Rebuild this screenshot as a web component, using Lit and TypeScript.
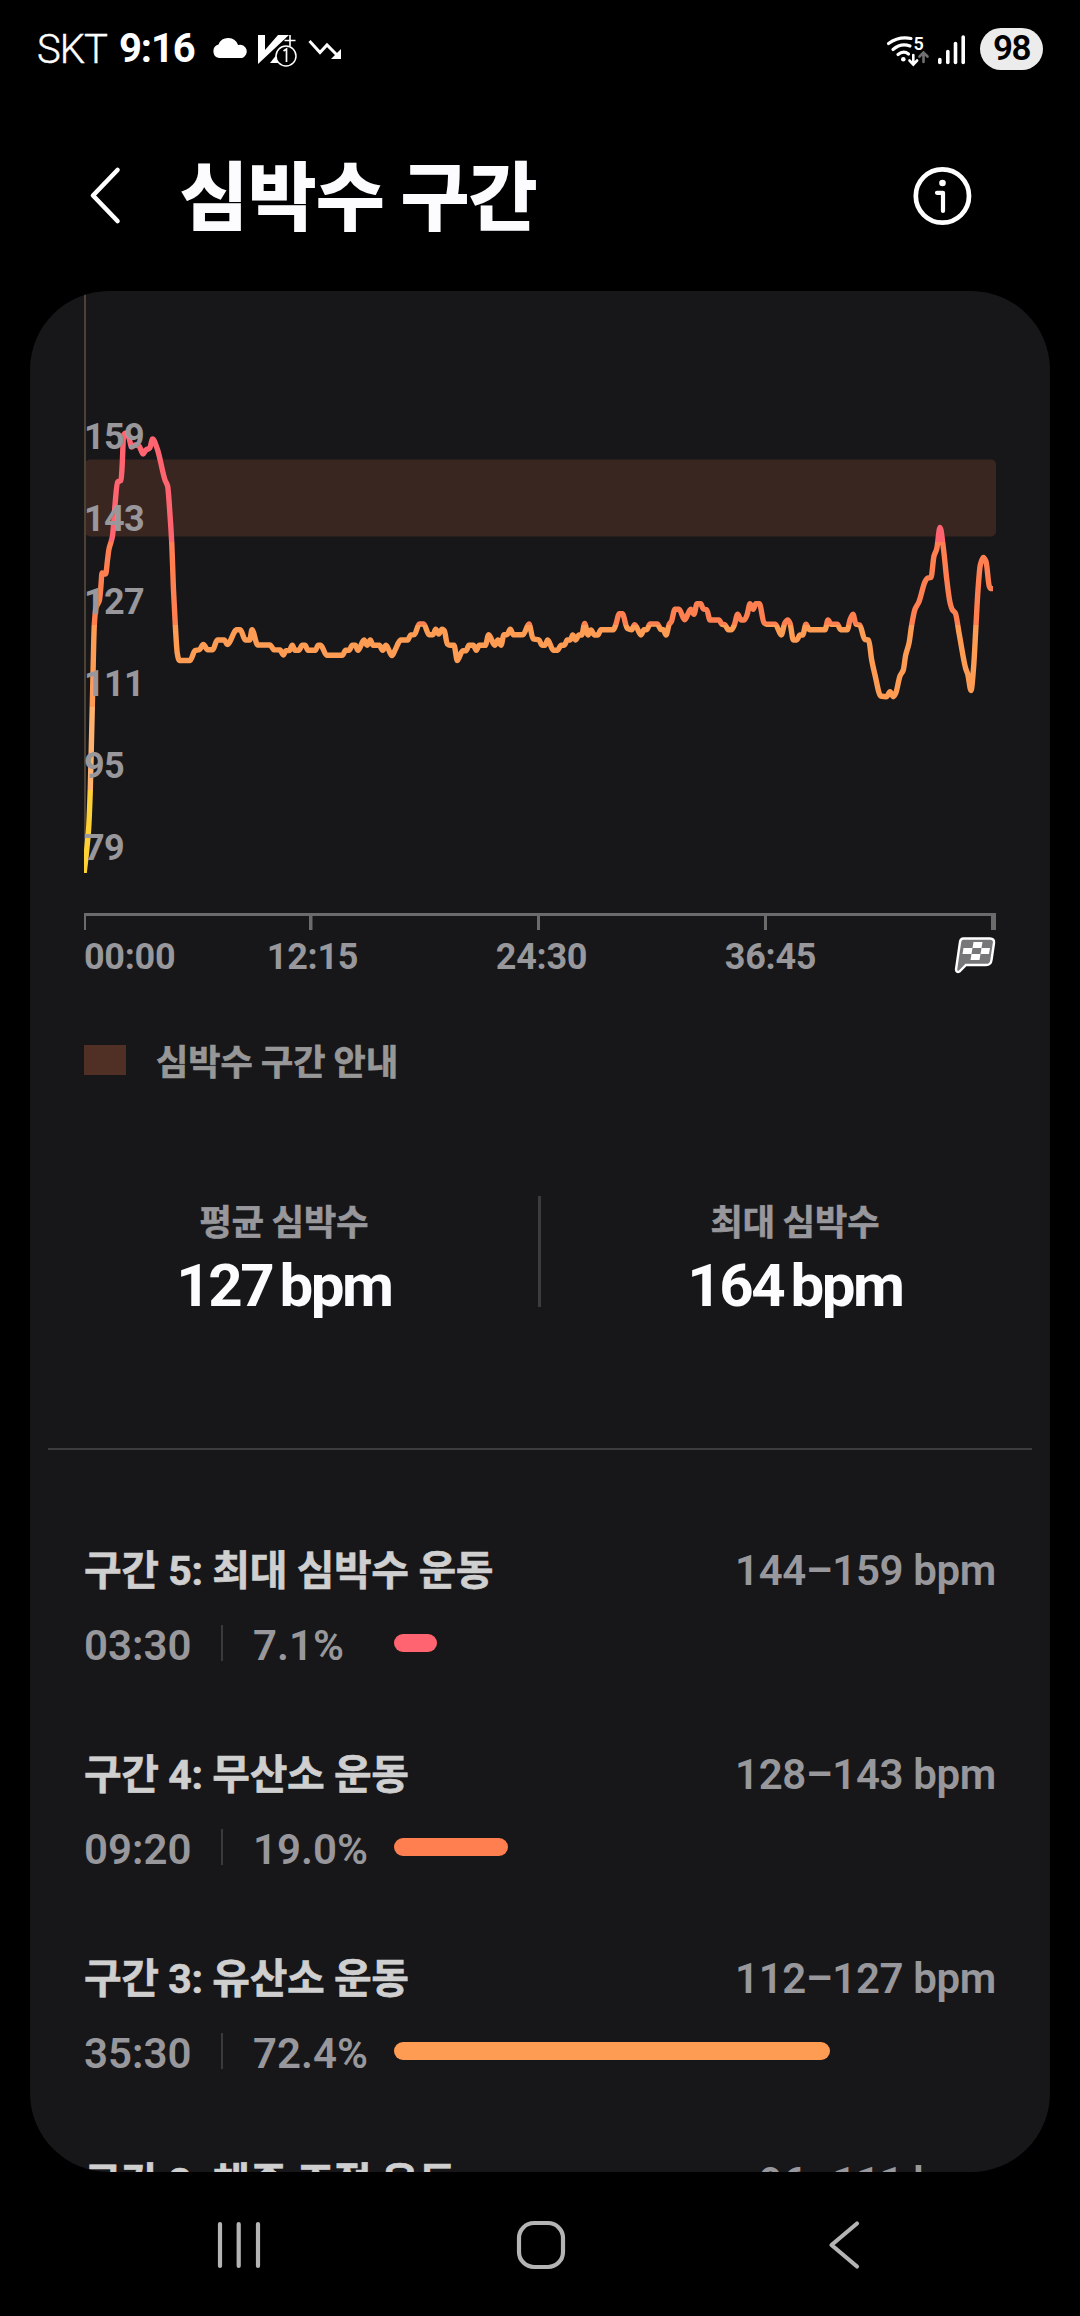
import { LitElement, html, css, svg, nothing } from "lit";
import { customElement, property } from "lit/decorators.js";

interface Zone {
  name: string;
  range: string;
  time?: string;
  percent?: number;
  color?: string;
}

const ZONES: Zone[] = [
  { name: "구간 5: 최대 심박수 운동", range: "144–159 bpm", time: "03:30", percent: 7.1, color: "#ff6470" },
  { name: "구간 4: 무산소 운동", range: "128–143 bpm", time: "09:20", percent: 19.0, color: "#ff7f50" },
  { name: "구간 3: 유산소 운동", range: "112–127 bpm", time: "35:30", percent: 72.4, color: "#ff9c54" },
  { name: "구간 2: 체중 조절 운동", range: "96–111 bpm" },
];

/* Heart-rate samples as x,y pairs in chart space. */
const TRACE = [
  "84,874 86.5,852 88.6,829 90.3,789 91.3,748 92.3,706.5 93.2,665 94.3,625 96,608 99.5,600 101,585 102,573 104,574 105.7,574",
  "107.5,560 109,549 112.5,536 115,505 117.5,482 121,480.5 122.2,465 123.6,435 126,433 129,438 131.6,447 135,445 139,446 143,454 146,450 149.7,448 152.6,439",
  "157.3,449 165,480 167.6,486 170,515 171.7,542 173.5,590 175.3,625 177.3,653.5 179.3,660.5 190,660.5 195,650.6 199.3,649.8 203.3,644.5 207.7,649.8",
  "212.7,649.8 217.3,640 224.3,640 227.3,644.5 236.7,629.8 240.3,629.8 245.3,640 249.7,640 252,629.8 257.7,645 270,645 274,649.8",
  "280,650 283.3,655 286,650.6 289.3,650.6 292.3,645.3 295,650.3 298.7,650.3 302.3,645.3 305,645.3 308,650.3 315.3,650.3 318.3,645.3 320.7,645.3 326.7,655.3",
  "342.3,655.3 345.7,650.3 349,650.3 352.3,645.3 355.3,645.3 358,650.3 364,640 367,645.3 370.3,640 373,645.3 379.3,645.3 382.7,650.3 386,645.3 392,655.6",
  "395,650.3 400.7,640 407.7,640 410.7,635 414.3,634.7 419.3,624 423.7,624 429,634.7 433,634.7 435.7,629.3 438.7,634 442,629.3 444.3,630.7 447.3,644 450,645.3",
  "454,645.3 457.3,660.5 462.7,650.7 466,650.7 469,645.3 473.3,645.3 476.3,650.3 479.3,645.3 485.3,645.3 488.7,634.7 494.7,645.3 498,640 501,645.3",
  "504,634.7 507,634.7 510.3,629.3 513.3,634.7 523,634.7 529,624 533,638.7 539,640 542,645.3 545,645.3 547.7,640 553.3,650.3 557.3,650.3 561.3,645.3",
  "564.3,645.3 567.3,640 570.3,640 572.7,635 575.7,640 579,635 581.7,635 584.7,623.5 588,635 591,630 594.3,635 597.7,635 601,629.7 613.3,629.7 615.7,625",
  "619.3,613.7 622.3,613.7 627.3,628.3 631.7,629.7 634.7,624.7 641,635 644,629.7 646.7,629.7 650,624 657.3,624 660.7,629.3 663.3,629.7 666,635 669.3,624",
  "671.3,621.7 675,609.3 679,609.3 684.7,619.7 690.7,609.3 694,614.3 697,603.7 700.7,603.7 703.3,609 706.7,609.7 710,620 719,620 721.7,624 725,625 728.3,629.7",
  "731.7,629.7 734.3,625 737.7,614.3 741,620 744.3,620 747,615 750,603.7 753.3,609.3 755.7,603.7 759.3,603.7 764,622.7 766.7,624.3 775.3,624.3 781.3,635",
  "784.7,623.3 787.7,620 790,623.3 793.3,640 796.7,640 800,635 802.7,635 806,624.3 809.3,629.7 825,629.7 828,620 831,624.3 837.3,624.3 840.7,629.7 847.3,629.7",
  "850,620 853,614.3 856,624.3 859.7,625 864.7,639.3 868.7,640.3 871.7,660 875,675 880.7,696 886.7,696.7 890,691.7 893.3,696.7 895.7,693.3 900,676 903.3,670",
  "905.7,655 909,643.3 911.7,625 915,609.3 919,601.7 925,581.7 927.7,578 931,577.5 934,556 936.7,549 940,527.5 943.5,549 946.7,579 950,602.5 952.5,610 955.3,613",
  "959.3,634.6 965.7,668.6 967.7,674 971,690.5 973.5,668.6 976,625 978,590 980.3,565 983.3,557.5 986,561.5 989.3,586.4 990.7,588.6 993,588.6",
].join(" ");

/* Monotone cubic interpolation through the samples. */
function smoothPath(source: string): string {
  const pts = source.split(" ").map((p) => p.split(",").map(Number));
  const slope = pts.slice(1).map(([x, y], i) => (y - pts[i][1]) / (x - pts[i][0]));
  const tangent = pts.map((_, i) => {
    const a = slope[i - 1];
    const b = slope[i];
    if (a === undefined) return b;
    if (b === undefined) return a;
    return a * b <= 0 ? 0 : (2 * a * b) / (a + b);
  });
  let d = `M${pts[0][0]} ${pts[0][1]}`;
  for (let i = 1; i < pts.length; i++) {
    const [x0, y0] = pts[i - 1];
    const [x1, y1] = pts[i];
    const h = (x1 - x0) / 3;
    d += `C${(x0 + h).toFixed(2)} ${(y0 + h * tangent[i - 1]).toFixed(2)} ${(x1 - h).toFixed(2)} ${(y1 - h * tangent[i]).toFixed(2)} ${x1} ${y1}`;
  }
  return d;
}

const LEVELS: [string, number][] = [
  ["159", 449], ["143", 531], ["127", 614], ["111", 696], ["95", 777.5], ["79", 859.5],
];

const HANGUL = css`"Roboto", "Noto Sans CJK KR", sans-serif`;

@customElement("status-bar")
class StatusBar extends LitElement {
  static styles = css`
    :host { display: flex; height: 100px; align-items: flex-start; justify-content: space-between; font-family: ${HANGUL}; color: #fff; }
    .left { display: flex; padding: 25px 0 0 37px; height: 48px; align-items: center; }
    .carrier { font-size: 40px; font-weight: 350; letter-spacing: -1px; width: 82px; line-height: 48px; margin-top: 2px; -webkit-text-stroke: 0.4px #fff; }
    .clock { font-size: 40px; font-weight: 700; letter-spacing: -1.1px; line-height: 48px; width: 91px; margin-top: 0; }
    .right { display: flex; padding: 28px 37px 0 0; }
    .battery { width: 63px; height: 42px; border-radius: 21px; background: #ececec; color: #000; font-size: 35px; font-weight: 650; line-height: 42px; text-align: center; letter-spacing: -1.4px; }
  `;
  render() {
    return html`
      <div class="left">
        <span class="carrier">SKT</span><span class="clock">9:16</span>
        <svg width="135" height="48" viewBox="210 25 135 48">
          <path d="M219 58 a7 7 0 0 1 -.5 -13.6 a10.5 10.5 0 0 1 19.6 .7 a6.6 6.6 0 0 1 4 12.8 z" fill="#fff" />
          <path d="M258 35 h7 v15 l13 -15 h11 l-31 29 z" fill="#fff" />
          <path d="M270 63 l8 -10 v10 z" fill="#fff" />
          <path d="M290 35 v11 M284.5 40.5 h11" stroke="#fff" stroke-width="1.6" fill="none" />
          <circle cx="286" cy="56" r="10" fill="#000" stroke="#fff" stroke-width="1.5" />
          <path d="M283.5 51 l3 -2 v13" stroke="#fff" stroke-width="1.7" fill="none" />
          <path d="M309.5 41 l10.5 11.5 l7 -7.5 l12 12" stroke="#fff" stroke-width="3" fill="none" />
          <path d="M341 49 v10 h-10 z" fill="#fff" />
        </svg>
      </div>
      <div class="right">
        <svg width="95" height="42" viewBox="885 28 95 42">
          <g fill="none" stroke="#fff" stroke-linecap="round">
            <path d="M888.5 43.5 Q899 36 911 38.5" stroke-width="3.2" />
            <path d="M893 49.5 Q901 42.5 910 46" stroke-width="3.2" />
            <path d="M898 54.5 Q903.5 50 908.5 54" stroke-width="3.2" />
            <path d="M913.3 55 v9 M909.5 60.5 l3.8 4 l3.8 -4" stroke-width="2.6" />
            <path d="M923.5 62 v-9 M919.5 56.5 l4 -4 l4 4" stroke="#707070" stroke-width="2.6" />
          </g>
          <circle cx="903.3" cy="59.3" r="2.3" fill="#fff" />
          <text x="913.5" y="49.5" font-family="Roboto" font-size="18" font-weight="600" fill="#fff">5</text>
          <g stroke="#fff" stroke-width="3.6" stroke-linecap="round">
            <path d="M939.8 59.5 v3" /><path d="M947.8 51.5 v11" /><path d="M955.5 43.5 v19" /><path d="M963.2 37 v25.5" />
          </g>
        </svg>
        <div class="battery">98</div>
      </div>
    `;
  }
}

@customElement("page-header")
class PageHeader extends LitElement {
  static styles = css`
    :host { display: flex; height: 191px; box-sizing: border-box; padding: 0 106px 0 86px; align-items: center; font-family: "Noto Sans CJK KR", sans-serif; }
    .back { width: 94px; height: 60px; }
    .title { margin: -8px 0 0; flex: 1; color: #fcfcff; font-size: 74px; font-weight: 700; line-height: 100px; white-space: nowrap; -webkit-text-stroke: 1.8px #fcfcff; }
    .info { width: 64px; height: 64px; }
  `;
  render() {
    return html`
      <svg class="back" viewBox="86 165.5 94 60"><path d="M117.5 169.5 L93 195 L117.5 220.5" fill="none" stroke="#fff" stroke-width="4.6" stroke-linecap="round" stroke-linejoin="round" /></svg>
      <h1 class="title">심박수 구간</h1>
      <svg class="info" viewBox="0 0 64 64">
        <circle cx="32.4" cy="32" r="26.6" fill="none" stroke="#fff" stroke-width="4.7" />
        <circle cx="32.5" cy="19" r="3.3" fill="#fff" />
        <path d="M27 28.8 H33 V47" fill="none" stroke="#fff" stroke-width="4.2" stroke-linecap="round" stroke-linejoin="round" />
      </svg>
    `;
  }
}

@customElement("heart-chart")
class HeartChart extends LitElement {
  static styles = css`
    :host { display: block; height: 700px; }
    svg { display: block; }
    text { font-family: "Roboto", sans-serif; font-size: 36px; font-weight: 700; fill: #98979c; }
    .level { letter-spacing: -0.6px; }
    .tick { letter-spacing: -0.3px; font-weight: 700; }
  `;
  render() {
    return html`
      <svg width="1020" height="700" viewBox="30 291 1020 700">
        <defs>
          <linearGradient id="zones" gradientUnits="userSpaceOnUse" x1="0" y1="542" x2="0" y2="789.5">
            <stop offset="0" stop-color="#ff6470" /><stop offset="0" stop-color="#ff7f50" />
            <stop offset=".335" stop-color="#ff7f50" /><stop offset=".335" stop-color="#ff9c54" />
            <stop offset=".665" stop-color="#ff9c54" /><stop offset=".665" stop-color="#ffb26e" />
            <stop offset="1" stop-color="#ffb26e" /><stop offset="1" stop-color="#fdd036" />
          </linearGradient>
          <clipPath id="plot"><rect x="84" y="291" width="909" height="582" /></clipPath>
        </defs>
        <rect x="85" y="459.5" width="911" height="77" rx="5" fill="#3a2620" />
        <rect x="84" y="291" width="2" height="582" fill="#4b4135" />
        <path d=${smoothPath(TRACE)} clip-path="url(#plot)" fill="none" stroke="url(#zones)" stroke-width="5.4" stroke-linejoin="round" />
        ${LEVELS.map(([t, y]) => svg`<text class="level" x="84" y=${y}>${t}</text>`)}
        <g fill="#6b6b6b">
          <rect x="84" y="913" width="912" height="3" />
          <rect x="84" y="913" width="2" height="17" /><rect x="309" y="913" width="3.5" height="17" />
          <rect x="537" y="913" width="3" height="17" /><rect x="764" y="913" width="3" height="17" />
          <rect x="991" y="913" width="5" height="17" />
        </g>
        <text class="tick" x="84" y="968.5">00:00</text>
        <text class="tick" x="312.5" y="968.5" text-anchor="middle">12:15</text>
        <text class="tick" x="541.5" y="968.5" text-anchor="middle">24:30</text>
        <text class="tick" x="770.5" y="968.5" text-anchor="middle">36:45</text>
        <path d="M963.5 938.5 H990 Q994.5 938.5 994 943 L991.5 960 Q991 965 986 965 H966 L959.5 971.5 Q956.5 973 956 969.5 L960 942 Q960.5 938.5 963.5 938.5 Z" fill="#77777a" stroke="#fff" stroke-width="2.4" />
        <path d="M973.5 942 h9 l-1 6 h-9 z M963.5 948 h9 l-1 6 h-9 z M981.5 948 h8.5 l-1 6 h-8.5 z M971.5 954 h9 l-1 6 h-9 z" fill="#fff" />
      </svg>
    `;
  }
}

@customElement("stat-block")
class StatBlock extends LitElement {
  @property() label = "";
  @property() value = "";
  static styles = css`
    :host { display: flex; flex-direction: column; align-items: center; font-family: ${HANGUL}; }
    .label { font-family: "Noto Sans CJK KR", sans-serif; font-size: 35px; font-weight: 700; line-height: 48px; color: #98979c; -webkit-text-stroke: 0.7px #98979c; }
    .value { display: flex; gap: 7px; font-size: 60px; font-weight: 700; line-height: 84px; letter-spacing: -2.4px; color: #fcfcff; }
  `;
  render() {
    return html`<div class="label">${this.label}</div><div class="value"><span>${this.value}</span><span>bpm</span></div>`;
  }
}

@customElement("zone-row")
class ZoneRow extends LitElement {
  @property({ attribute: false }) zone!: Zone;
  static styles = css`
    :host { display: flex; flex-direction: column; height: 204px; font-family: ${HANGUL}; font-size: 42px; font-weight: 650; color: #98979c; white-space: nowrap; }
    .head { display: flex; justify-content: space-between; line-height: 60px; }
    .name { font-size: 41px; font-weight: 700; letter-spacing: -0.42px; color: #cfcfd0; -webkit-text-stroke: 0.6px #cfcfd0; }
    .range { letter-spacing: -0.35px; }
    .body { display: flex; align-items: center; height: 60px; margin-top: 14px; }
    .time { width: 137px; }
    .rule { width: 2px; height: 36px; background: #3a3a3c; margin-right: 30px; margin-top: -4px; }
    .pct { width: 141px; }
    .track { flex: 1; margin-top: -4px; }
    .fill { height: 18px; border-radius: 9px; }
  `;
  render() {
    const z = this.zone;
    return html`
      <div class="head"><span class="name">${z.name}</span><span class="range">${z.range}</span></div>
      ${z.percent === undefined
        ? nothing
        : html`<div class="body">
            <span class="time">${z.time}</span><span class="rule"></span><span class="pct">${z.percent.toFixed(1)}%</span>
            <div class="track"><div class="fill" style="width:${z.percent}%;background:${z.color}"></div></div>
          </div>`}
    `;
  }
}

@customElement("nav-bar")
class NavBar extends LitElement {
  static styles = css`
    :host { display: grid; flex: 1; grid-template-columns: 300px 1fr auto; align-items: center; padding: 2px 219px 0 216px; box-sizing: border-box; }
    svg { display: block; }
    svg * { fill: none; stroke: #b4b4b4; stroke-width: 4.2; stroke-linecap: round; stroke-linejoin: round; }
  `;
  render() {
    return html`
      <svg width="46" height="50" viewBox="0 0 46 50"><path d="M4 4 V46 M22.7 4 V46 M42 4 V46" /></svg>
      <svg width="50" height="50" viewBox="0 0 50 50"><rect x="3" y="3" width="44" height="44" rx="15" /></svg>
      <svg width="34" height="50" viewBox="0 0 34 50"><path d="M30 3.5 L4.5 25 L30 46.5" /></svg>
    `;
  }
}

@customElement("app-root")
class AppRoot extends LitElement {
  static styles = css`
    :host { display: flex; flex-direction: column; width: 1080px; height: 2316px; background: #000; overflow: hidden; }
    .card { height: 1881px; margin: 0 30px; border-radius: 79px; overflow: hidden; background: #17171a; }
    .legend { display: flex; align-items: center; gap: 30px; padding: 44px 54px 0; height: 50px; }
    .swatch { width: 42px; height: 30px; background: #502f25; }
    .caption { font: 700 35px/50px "Noto Sans CJK KR", sans-serif; letter-spacing: 0.1px; color: #979797; -webkit-text-stroke: 0.7px #979797; }
    .stats { display: flex; height: 234px; padding-top: 111px; box-sizing: border-box; }
    .stats stat-block { width: 508px; }
    .split { width: 3px; height: 111px; background: #3c3c3f; }
    .line { height: 2px; margin: 129px 18px 0; background: #3c3c3e; }
    .zones { padding: 91px 54px 0; }
  `;
  render() {
    return html`
      <status-bar></status-bar>
      <page-header></page-header>
      <main class="card">
        <heart-chart></heart-chart>
        <div class="legend"><span class="swatch"></span><span class="caption">심박수 구간 안내</span></div>
        <section class="stats">
          <stat-block label="평균 심박수" value="127"></stat-block>
          <div class="split"></div>
          <stat-block label="최대 심박수" value="164"></stat-block>
        </section>
        <div class="line"></div>
        <section class="zones">${ZONES.map((z) => html`<zone-row .zone=${z}></zone-row>`)}</section>
      </main>
      <nav-bar></nav-bar>
    `;
  }
}
